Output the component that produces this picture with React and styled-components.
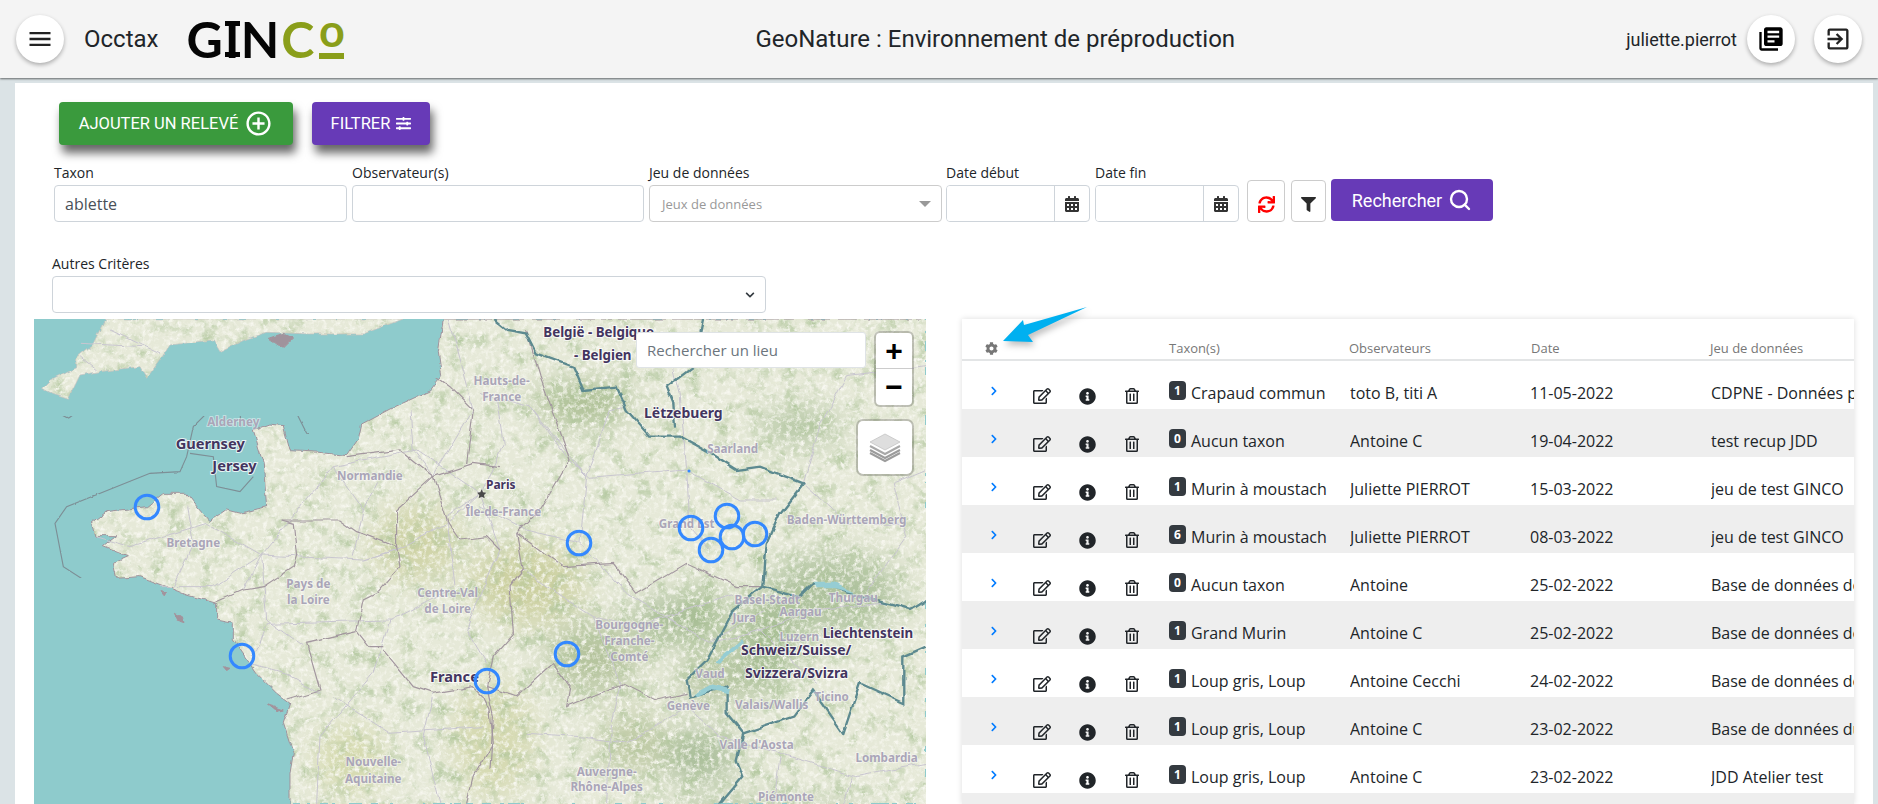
import React from 'react'
import styled, { createGlobalStyle } from 'styled-components'
import { MdMenu, MdLibraryBooks, MdExitToApp, MdAddCircleOutline } from 'react-icons/md'
import { Search } from 'lucide-react'
import {
  FaCalendarAlt, FaSync, FaFilter, FaCog, FaRegEdit, FaInfoCircle, FaRegTrashAlt, FaChevronRight, FaChevronDown, FaSlidersH,
} from 'react-icons/fa'

const GlobalStyle = createGlobalStyle`
  html, body { margin: 0; padding: 0; height: 100%; overflow: hidden; }
  body { background: #dbe3e6; font-family: "Open Sans", "Noto Sans", sans-serif; color: #212529; }
  * { box-sizing: border-box; }
`

/// TABLE DATA
const rows = [
  { n: 1, taxon: 'Crapaud commun', obs: 'toto B, titi A', date: '11-05-2022', jdd: 'CDPNE - Données partenaires' },
  { n: 0, taxon: 'Aucun taxon', obs: 'Antoine C', date: '19-04-2022', jdd: 'test recup JDD' },
  { n: 1, taxon: 'Murin à moustach', obs: 'Juliette PIERROT', date: '15-03-2022', jdd: 'jeu de test GINCO' },
  { n: 6, taxon: 'Murin à moustach', obs: 'Juliette PIERROT', date: '08-03-2022', jdd: 'jeu de test GINCO' },
  { n: 0, taxon: 'Aucun taxon', obs: 'Antoine', date: '25-02-2022', jdd: 'Base de données des partenaires' },
  { n: 1, taxon: 'Grand Murin', obs: 'Antoine C', date: '25-02-2022', jdd: 'Base de données des partenaires' },
  { n: 1, taxon: 'Loup gris, Loup', obs: 'Antoine Cecchi', date: '24-02-2022', jdd: 'Base de données des partenaires' },
  { n: 1, taxon: 'Loup gris, Loup', obs: 'Antoine C', date: '23-02-2022', jdd: 'Base de données du réseau' },
  { n: 1, taxon: 'Loup gris, Loup', obs: 'Antoine C', date: '23-02-2022', jdd: 'JDD Atelier test' },
  { n: null },
]

/// MAP DRAWING, points are read from crops of the map so each group is scaled by a third
const LAND = 'M760 360L790 460L800 590L760 600L720 610L680 600L630 635L590 590L560 550L490 550L440 590L320 605L275 640L285 680L350 680L310 710L385 740L340 760L350 805L420 800L500 830L560 855L650 880L650 930L700 940L700 990L770 1090L830 1150L870 1180L850 1240L880 1330L870 1390L870 1490L2900 1490L2900 27L1330 27L1315 127L1325 197L1290 242L1170 297L1085 342L1075 387L1040 437L960 427L870 422L850 347L810 342Z'
const UK = 'M125 235L150 250L205 268L240 195L300 185L420 170L440 205L480 150L510 105L640 90L660 125L740 87L800 67L930 72L1090 72L1210 27L315 27L280 100L230 140L230 170L150 210Z'
const ISLANDS = ['M805 85L850 70L880 85L850 115Z', 'M520 910L550 920L555 938L530 930Z', 'M670 1070L690 1075L680 1082Z', 'M805 1185L850 1200L830 1205Z', 'M480 845L500 850L490 858Z']
const SEA_BOUNDS = [
  'M180 27L180 110L160 150L103 175',
  'M103 300L150 298L205 325L270 280L320 228L450 260L500 240L540 150L600 130L650 180L780 145L850 165L1000 110L1100 125L1240 70L1270 27',
  'M1270 27L1262 120L1260 200L1040 300L1020 375L920 370L880 290L720 280L640 290L580 350L560 440L540 485L450 490L200 590L165 640L190 770L360 880L460 895L490 960L550 985L610 985L620 1090L720 1150L790 1280L820 1370L815 1482',
  'M570 430L640 440L650 530L720 545L760 500M720 280L722 350',
]
const REGIONS_W = [
  'M845 630L880 640L890 740L880 770L790 830L730 840L640 880',
  'M845 630L1020 630L1070 665L1190 710L1200 770L1130 850L1090 870L1070 960L1110 1010L1150 1010',
  'M1040 440L1200 420L1300 500L1190 600L1190 710',
  'M1070 965L920 1000L960 1140L860 1170',
  'M1150 1020L1240 1130L1300 1150L1420 1130L1450 1160L1470 1200L1480 1300L1420 1400L1400 1480',
  'M1300 500L1345 640L1380 690L1460 680L1500 720',
  'M1300 500L1420 460L1500 470M1310 200L1350 230L1420 300L1400 460',
]
const REGIONS_E = [
  'M110 670L250 770L400 760L470 850L620 760L770 830L850 830',
  'M140 60L180 200L270 450L180 600L110 670',
  'M220 1060L270 1130L260 1190L430 1120L530 1170L620 1150',
  'M110 670L130 780L90 830L100 970L40 1040L20 1130L40 1220L30 1380',
  'M20 1130L110 1160L220 1060',
]
const ROADS_W = [
  'M785 735L620 640L390 710L285 680M785 735L640 830L480 830M785 735L880 740L1090 750L1200 715M785 735L800 930L910 1010M785 735L730 840',
  'M785 735L1000 470L1250 420L1440 550M1000 470L1090 600L1060 740M1440 550L1340 640L1200 715L1090 750M1440 550L1340 620L1365 830L1170 930L1120 1090L960 1280L950 1480',
  'M1170 930L800 940L750 1060L860 1090L960 1150M1440 550L1500 720L1420 900L1400 960L1460 1060',
  'M560 590L580 700L520 830M1230 300L1240 420L1300 500L1420 300L1345 30M1090 600L1130 520M1300 1150L1270 1280L1320 1480M1000 1160L1170 1270L1450 1250',
  'M240 140L290 180M240 100L430 110M330 60L480 130',
]
const ROADS_E = [
  'M0 590L140 660L300 700L320 500L270 450L330 505L620 480L780 570L890 570M620 480L630 650L690 720M300 700L440 850L690 1000L850 900',
  'M0 250L150 290L260 440M50 270L70 400L0 560M150 290L320 500M320 500L390 300L430 290M620 480L600 250L570 130',
  'M130 780L230 850L340 920L460 950L620 900L760 850M340 920L420 1120L395 1230L380 1480M140 1270L300 1280L440 1300L640 1180',
  'M700 1000L840 960L1000 900L1210 880M840 960L930 1050L1010 1120M1020 350L990 450L970 520L1100 640L1260 640M1020 350L1100 200L1338 170',
  'M620 1190L720 1280L900 1330L1130 1400L1338 1360M1160 850L1280 680L1240 520L1338 480M900 1340L880 1482M1120 1400L1090 1482',
]
const BORDERS = [
  'M40 27L80 60L140 70L170 130L280 170L310 240L410 230L440 300L510 380L600 380L690 430L770 480L840 470L970 520L900 610L860 700L850 830',
  'M850 830L960 860L1000 820L1060 830L1180 870L1290 900L1338 870',
  'M850 830L760 900L680 1050L620 1110L630 1160L740 1130L740 1210L790 1270L940 1220L1000 1140L1090 1270L1140 1120L1270 1180L1270 1040L1338 1010',
  'M790 1270L770 1350L790 1400L720 1482',
  'M560 230L640 170L670 27M560 230L580 280L585 350',
]
const TINTS = [
  [1250, 700, 130, 110, '#cfd3a6'], [1480, 1290, 120, 170, '#d5d9b0'], [1580, 820, 170, 120, '#ccd0a0'],
  [1750, 280, 150, 60, '#a5ba8b'], [1990, 930, 90, 60, '#9fb68d'], [2110, 920, 60, 100, '#a0b98c'],
  [2300, 1000, 90, 150, '#a3bb90'], [2100, 1340, 110, 80, '#a6bb96'], [2300, 1550, 340, 70, '#b4c4a3'],
  [2400, 350, 130, 40, '#a2ba90'], [2150, 1110, 120, 60, '#aec099'], [1900, 1300, 100, 90, '#bdc9a3'],
  [1780, 1040, 140, 110, '#b6c49e'], [1050, 1350, 100, 100, '#d4d9ac'], [2500, 850, 200, 120, '#afc29e'],
]
const LABELS_W = [
  ['Alderney', 700, 347], ['Normandie', 1110, 511], ['Bretagne', 580, 710], ['Pays de', 925, 834], ['la Loire', 925, 882],
  ['Centre-Val', 1343, 860], ['de Loire', 1343, 908], ['Nouvelle-', 1120, 1368], ['Aquitaine', 1120, 1418], ['Île-de-France', 1510, 617],
]
const LABELS_E = [
  ['Saarland', 758, 430], ['Grand Est', 620, 655], ['Baden-Württemberg', 1100, 642], ['Basel-Stadt', 862, 882], ['Thurgau', 1120, 875],
  ['Jura', 793, 935], ['Aargau', 962, 918], ['Luzern', 958, 993], ['Vaud', 690, 1103], ['Genève', 625, 1200], ['Valais/Wallis', 875, 1198],
  ['Ticino', 1055, 1172], ["Valle d'Aosta", 830, 1316], ['Lombardia', 1220, 1355], ['Piémonte', 918, 1473], ['Auvergne-', 380, 1397],
  ['Rhône-Alpes', 380, 1443], ['Bourgogne-', 448, 957], ['Franche-', 448, 1005], ['Comté', 448, 1053], ['Hauts-de-', 65, 225], ['France', 65, 274],
]
const NAMES_W = [['Guernsey', 527, 418, 44], ['Jersey', 637, 482, 44], ['France', 1290, 1115, 44]]
const NAMES_E = [
  ['Paris', 18, 538, 36], ['België - Belgique', 190, 80, 40], ['- Belgien', 282, 150, 40], ['Lëtzebuerg', 492, 325, 42],
  ['Liechtenstein', 1028, 985, 40], ['Schweiz/Suisse/', 783, 1034, 42], ['Svizzera/Svizra', 795, 1104, 42],
]
const MARKERS = [[147, 507], [242, 656], [487, 681], [579, 543], [567, 654], [691, 528], [727, 516], [732, 537], [711, 550], [755, 534]]

const MapDrawing = () => (
  <MapSvg viewBox="34 319 892 485" preserveAspectRatio="none">
    <defs>
      <filter id="rough" filterUnits="userSpaceOnUse" x="34" y="319" width="892" height="485">
        <feTurbulence type="fractalNoise" baseFrequency="0.09" numOctaves="3" seed="4" />
        <feDisplacementMap in="SourceGraphic" scale="5" xChannelSelector="R" yChannelSelector="G" />
      </filter>
      <filter id="wiggle" filterUnits="userSpaceOnUse" x="34" y="319" width="892" height="485">
        <feTurbulence type="fractalNoise" baseFrequency="0.06" numOctaves="2" seed="9" />
        <feDisplacementMap in="SourceGraphic" scale="6" xChannelSelector="R" yChannelSelector="G" />
      </filter>
      <filter id="mottle" colorInterpolationFilters="sRGB">
        <feTurbulence type="fractalNoise" baseFrequency="0.06" numOctaves="4" seed="7" />
        <feColorMatrix values="0 0 0 0 .68  0 0 0 0 .77  0 0 0 0 .6  2.2 0 0 0 -1.05" />
      </filter>
      <filter id="speckle" colorInterpolationFilters="sRGB">
        <feTurbulence type="fractalNoise" baseFrequency="0.22" numOctaves="3" seed="12" />
        <feColorMatrix values="0 0 0 0 .97  0 0 0 0 .97  0 0 0 0 .94  2.6 0 0 0 -1.15" />
      </filter>
      <filter id="soft" x="-30%" y="-30%" width="160%" height="160%"><feGaussianBlur stdDeviation="45" /></filter>
      <mask id="landMask" maskUnits="userSpaceOnUse" x="34" y="319" width="892" height="485">
        <g fill="#fff" transform="translate(0 310) scale(.3333)">
          <path d={LAND} />
          <path d={UK} />
          {ISLANDS.map(d => <path key={d} d={d} />)}
        </g>
      </mask>
    </defs>

    <rect x="34" y="319" width="892" height="485" fill="#8ecbcc" />

    <g filter="url(#rough)">
      <g mask="url(#landMask)">
        <rect x="34" y="319" width="892" height="485" fill="#e6e9d8" />
        <g transform="translate(0 310) scale(.3333)" filter="url(#soft)">
          {TINTS.map(([cx, cy, rx, ry, fill]) => (
            <ellipse key={`${cx}-${cy}`} cx={cx} cy={cy} rx={rx} ry={ry} fill={fill} />
          ))}
        </g>
        <rect x="34" y="319" width="892" height="485" filter="url(#mottle)" />
        <rect x="34" y="319" width="892" height="485" filter="url(#speckle)" />
      </g>
      <g fill="none" stroke="#a0939c" strokeWidth="3" transform="translate(0 310) scale(.3333)">
        <path d={LAND} />
        <path d={UK} strokeWidth="2" stroke="#c4c0be" />
        {ISLANDS.map(d => <path key={d} d={d} fill="#a0939c" />)}
      </g>
    </g>

    <g fill="none" stroke="#7d8f96" strokeWidth="3.4" filter="url(#wiggle)" transform="translate(0 310) scale(.3333)">
      {SEA_BOUNDS.map(d => <path key={d} d={d} />)}
    </g>

    <g filter="url(#wiggle)" fill="none">
      <g stroke="#c9c6d0" strokeWidth="3" transform="translate(0 310) scale(.3333)">
        {ROADS_W.map(d => <path key={d} d={d} />)}
      </g>
      <g stroke="#c9c6d0" strokeWidth="3" transform="translate(480 310) scale(.3333)">
        {ROADS_E.map(d => <path key={d} d={d} />)}
      </g>
      <g stroke="#a3979f" strokeWidth="3.6" transform="translate(0 310) scale(.3333)">
        {REGIONS_W.map(d => <path key={d} d={d} />)}
      </g>
      <g stroke="#a3979f" strokeWidth="3.6" transform="translate(480 310) scale(.3333)">
        {REGIONS_E.map(d => <path key={d} d={d} />)}
      </g>
      <g transform="translate(480 310) scale(.3333)">
        {BORDERS.map(d => <path key={d} d={d} stroke="#5d8a90" strokeWidth="7" />)}
      </g>
      <g fill="#96cdd3" stroke="none" transform="translate(480 310) scale(.3333)">
        <path d="M640 1150L690 1122L750 1135L745 1150L690 1140L650 1160Z" />
        <path d="M705 1055L790 985L795 995L720 1058Z" />
        <path d="M1000 815L1060 815L1130 850L1060 835L1010 835Z" />
      </g>
    </g>

    <g transform="translate(0 310) scale(.3333)">
      {LABELS_W.map(([t, x, y]) => <RegionLabel key={t} x={x} y={y} textAnchor="middle">{t}</RegionLabel>)}
      {NAMES_W.map(([t, x, y, s]) => <PlaceName key={t} x={x} y={y} fontSize={s}>{t}</PlaceName>)}
    </g>
    <g transform="translate(480 310) scale(.3333)">
      {LABELS_E.map(([t, x, y]) => <RegionLabel key={t} x={x} y={y} textAnchor="middle">{t}</RegionLabel>)}
      {NAMES_E.map(([t, x, y, s]) => <PlaceName key={t} x={x} y={y} fontSize={s}>{t}</PlaceName>)}
      <path d="M5 538l4 9 10 1-7 7 2 10-9-5-9 5 2-10-7-7 10-1z" fill="#4a4a4a" />
    </g>

    <circle cx="689" cy="471" r="1.5" fill="#3388ff" />
    {MARKERS.map(([cx, cy]) => (
      <circle key={`${cx}-${cy}`} cx={cx} cy={cy} r="11.8" fill="none" stroke="#3388ff" strokeWidth="3" />
    ))}
  </MapSvg>
)

const LayersIcon = () => (
  <svg width="32" height="32" viewBox="0 0 32 32" fill="none">
    <path d="M1 21l15 8 15-8" stroke="#9c9c9c" strokeWidth="2" />
    <path d="M1 18l15 8 15-8" stroke="#9c9c9c" strokeWidth="2" />
    <path d="M1 14l15 8 15-8" stroke="#a8a8a8" strokeWidth="2" />
    <path d="M16 2L1 10l15 8 15-8z" fill="#dedede" stroke="#c4c4c4" strokeWidth=".8" />
  </svg>
)

const Arrow = () => (
  <ArrowSvg width="96" height="50" viewBox="0 0 96 50">
    <path d="M92 4L29 22L28 17L8 38L38 39L33 32Z" fill="#00b0f0" />
  </ArrowSvg>
)

const Field = ({ label, width, shift, children }) => (
  <FieldBox $width={width} $shift={shift}>
    <FieldLabel>{label}</FieldLabel>
    {children}
  </FieldBox>
)

const DateField = ({ label, shift }) => (
  <Field label={label} width={144} shift={shift}>
    <InputGroup>
      <DateInput />
      <CalendarAddon><FaCalendarAlt size={16} /></CalendarAddon>
    </InputGroup>
  </Field>
)

const Badge = styled.span`
  display: inline-flex;
  flex: none;
  align-items: center;
  justify-content: center;
  width: 17px;
  height: 19px;
  margin-right: 5px;
  border-radius: 4px;
  background: #343a40;
  color: #fff;
  font-size: 12px;
  font-weight: 700;
`

const App = () => (
  <Page>
    <GlobalStyle />
    <Header>
      <RoundButton><MdMenu size={28} /></RoundButton>
      <ModuleName>Occtax</ModuleName>
      <Logo>
        G<LogoI>I</LogoI>N<LogoC>C</LogoC>
        <LogoSup>o<LogoBar /></LogoSup>
      </Logo>
      <Title>GeoNature : Environnement de préproduction</Title>
      <UserName>juliette.pierrot</UserName>
      <RoundButton $gap={10}><MdLibraryBooks size={28} color="#000" /></RoundButton>
      <RoundButton $gap={19}><MdExitToApp size={28} /></RoundButton>
    </Header>

    <Card>
      <ActionBar>
        <ActionButton $bg="#3a9a3d" $width={234}>AJOUTER UN RELEVÉ <MdAddCircleOutline size={29} /></ActionButton>
        <ActionButton $bg="#673ab7" $width={118}>FILTRER <FaSlidersH size={15} /></ActionButton>
      </ActionBar>

      <FilterRow>
        <Field label="Taxon" width={293}><TextInput defaultValue="ablette" /></Field>
        <Field label="Observateur(s)" width={292}><TextInput /></Field>
        <Field label="Jeu de données" width={293}>
          <SelectBox>
            Jeux de données
            <Caret />
          </SelectBox>
        </Field>
        <DateField label="Date début" shift={-1} />
        <DateField label="Date fin" />
        <ToolButton $width={38} $shift={3}><FaSync size={17} color="#ff0000" /></ToolButton>
        <ToolButton $width={35} $shift={1}><FaFilter size={15} color="#2b2b2b" /></ToolButton>
        <SearchButton>Rechercher <Search size={24} strokeWidth={2.4} /></SearchButton>
      </FilterRow>

      <OtherCriteria>
        <FieldLabel>Autres Critères</FieldLabel>
        <CriteriaSelect><FaChevronDown size={10} color="#343a40" /></CriteriaSelect>
      </OtherCriteria>

      <Content>
        <MapPane>
          <MapDrawing />
          <PlaceSearch>Rechercher un lieu</PlaceSearch>
          <ZoomControl>
            <ZoomButton>+</ZoomButton>
            <ZoomButton>−</ZoomButton>
          </ZoomControl>
          <LayersControl><LayersIcon /></LayersControl>
        </MapPane>

        <TablePane>
          <Arrow />
          <HeadRow>
            <HeadGear><FaCog size={13} color="#777" /></HeadGear>
            <HeadCell>Taxon(s)</HeadCell>
            <HeadCell>Observateurs</HeadCell>
            <HeadCell>Date</HeadCell>
            <HeadCell>Jeu de données</HeadCell>
          </HeadRow>
          {rows.map((row, i) => (
            <Row key={i} $odd={i % 2 === 1}>
              {row.n !== null && (
                <>
                  <Actions>
                    <RowChevron size={10} color="#007bff" />
                    <ActionIcons>
                      <FaRegEdit size={18} />
                      <FaInfoCircle size={17} />
                      <FaRegTrashAlt size={16} />
                    </ActionIcons>
                  </Actions>
                  <Cell $width={158}><Badge>{row.n}</Badge>{row.taxon}</Cell>
                  <Cell>{row.obs}</Cell>
                  <Cell>{row.date}</Cell>
                  <Cell>{row.jdd}</Cell>
                </>
              )}
            </Row>
          ))}
        </TablePane>
      </Content>
    </Card>
  </Page>
)

export default App

const Page = styled.div`
  display: flex;
  flex-direction: column;
  height: 100vh;
  overflow: hidden;
`

const Header = styled.header`
  flex: none;
  display: flex;
  align-items: center;
  height: 78px;
  padding: 0 16px;
  background: #f4f4f4;
  box-shadow: 0 1px 2px rgba(0, 0, 0, .55);
  font-family: Roboto, sans-serif;
  position: relative;
`

const RoundButton = styled.div`
  flex: none;
  display: flex;
  align-items: center;
  justify-content: center;
  width: 48px;
  height: 48px;
  margin-left: ${p => p.$gap || 0}px;
  border-radius: 50%;
  background: #fff;
  color: #222;
  box-shadow: 0 2px 4px rgba(0, 0, 0, .3);
`

const ModuleName = styled.div`
  margin-left: 20px;
  font-size: 24px;
`

const Logo = styled.div`
  display: flex;
  align-items: flex-end;
  height: 50px;
  margin-left: 28px;
  font-family: Lato, sans-serif;
  font-size: 50px;
  font-weight: 700;
  line-height: 50px;
  color: #050505;
`

const LogoI = styled.span`
  position: relative;
  width: 15px;
  margin: 0 1px 0 2px;
  text-align: center;
  &::before, &::after {
    content: '';
    position: absolute;
    left: 0;
    right: 0;
    height: 5px;
    background: #050505;
  }
  &::before { top: 7px; }
  &::after { bottom: 7px; }
`

const LogoC = styled.span`
  margin-left: 2px;
  color: #8a9e1a;
`

const LogoSup = styled.span`
  display: flex;
  flex-direction: column;
  align-items: center;
  width: 27px;
  margin-left: 4px;
  font-size: 45px;
  line-height: 20px;
  height: 44px;
  color: #8a9e1a;
`

const LogoBar = styled.span`
  display: block;
  flex: none;
  width: 25px;
  height: 6px;
  margin-top: 13px;
  background: #8a9e1a;
`

const Title = styled.div`
  margin-left: 410px;
  font-size: 24px;
  white-space: nowrap;
`

const UserName = styled.div`
  margin-left: auto;
  font-size: 18px;
`

const Card = styled.main`
  flex: 1;
  min-height: 0;
  margin: 5px 5px 0 15px;
  padding: 19px 19px 0;
  background: #fff;
  overflow: hidden;
`

const ActionBar = styled.div`
  display: flex;
  gap: 19px;
  margin-left: 25px;
`

const ActionButton = styled.div`
  display: flex;
  align-items: center;
  justify-content: center;
  gap: 6px;
  width: ${p => p.$width}px;
  height: 43px;
  border-radius: 4px;
  background: ${p => p.$bg};
  color: #fff;
  font-family: Roboto, sans-serif;
  font-size: 16.500px;
  font-weight: 400;
  box-shadow: 3px 8px 10px rgba(0, 0, 0, .6);
`

const FilterRow = styled.div`
  display: flex;
  align-items: flex-end;
  gap: 5px;
  height: 60px;
  margin: 17px 0 0 20px;
`

const FieldBox = styled.div`
  flex: none;
  width: ${p => p.$width}px;
  margin-left: ${p => p.$shift || 0}px;
`

const FieldLabel = styled.label`
  display: block;
  height: 22px;
  font-size: 14px;
  line-height: 19px;
  color: #212529;
`

const TextInput = styled.input`
  display: block;
  width: 100%;
  height: 37px;
  padding: 0 10px;
  border: 1px solid #ced4da;
  border-radius: 4px;
  background: #fff;
  color: #495057;
  font: 16px "Open Sans", sans-serif;
`

const SelectBox = styled.div`
  display: flex;
  align-items: center;
  justify-content: space-between;
  height: 37px;
  padding: 0 10px 0 12px;
  border: 1px solid #ccc;
  border-radius: 4px;
  color: #999;
  font-size: 13px;
`

const Caret = styled.span`
  border-left: 6px solid transparent;
  border-right: 6px solid transparent;
  border-top: 6px solid #999;
`

const InputGroup = styled.div`
  display: flex;
  height: 37px;
  border: 1px solid #ced4da;
  border-radius: 4px;
  overflow: hidden;
`

const DateInput = styled.input`
  flex: 1;
  min-width: 0;
  border: 0;
  outline: 0;
`

const CalendarAddon = styled.div`
  flex: none;
  display: flex;
  align-items: center;
  justify-content: center;
  width: 35px;
  border-left: 1px solid #ced4da;
  color: #333;
`

const ToolButton = styled.div`
  flex: none;
  display: flex;
  align-items: center;
  justify-content: center;
  width: ${p => p.$width}px;
  height: 42px;
  margin-left: ${p => p.$shift}px;
  padding-top: 6px;
  border: 1px solid #ccc;
  border-radius: 4px;
`

const SearchButton = styled.div`
  flex: none;
  display: flex;
  align-items: center;
  justify-content: center;
  gap: 6px;
  width: 162px;
  height: 42px;
  margin-bottom: 1px;
  border-radius: 4px;
  background: #673ab7;
  color: #fff;
  font-family: Roboto, sans-serif;
  font-size: 18px;
  font-weight: 400;
`

const OtherCriteria = styled.div`
  width: 714px;
  margin: 32px 0 0 18px;
`

const CriteriaSelect = styled.div`
  display: flex;
  align-items: center;
  justify-content: flex-end;
  height: 37px;
  padding-right: 10px;
  border: 1px solid #ced4da;
  border-radius: 4px;
`

const Content = styled.div`
  display: grid;
  grid-template-columns: 1fr 1fr;
  gap: 36px;
  margin-top: 6px;
`

const MapPane = styled.section`
  position: relative;
  height: 485px;
  overflow: hidden;
  font-family: "Open Sans", sans-serif;
`

const MapSvg = styled.svg`
  display: block;
  width: 100%;
  height: 100%;
`

const RegionLabel = styled.text`
  font-family: "Noto Sans", sans-serif;
  font-size: 35px;
  font-weight: 700;
  fill: #aaa5b8;
  stroke: rgba(255, 255, 255, .55);
  stroke-width: 5px;
  paint-order: stroke;
`

const PlaceName = styled.text`
  font-family: "Noto Sans", sans-serif;
  font-weight: 700;
  fill: #43355f;
  stroke: rgba(255, 255, 255, .8);
  stroke-width: 6px;
  paint-order: stroke;
`

const PlaceSearch = styled.div`
  position: absolute;
  top: 13px;
  left: 602px;
  width: 230px;
  height: 36px;
  padding-left: 10px;
  border: 1px solid #dfe3e6;
  border-radius: 3px;
  background: #fff;
  color: #6c757d;
  font-size: 15px;
  line-height: 34px;
`

const ZoomControl = styled.div`
  position: absolute;
  top: 14px;
  left: 842px;
  width: 36px;
  height: 72px;
  border-radius: 4px;
  background: #fff;
  box-shadow: 0 0 0 2px rgba(0, 0, 0, .2);
  overflow: hidden;
`

const ZoomButton = styled.div`
  height: 36px;
  border-bottom: 1px solid #ccc;
  text-align: center;
  font-family: "Liberation Sans", sans-serif;
  font-size: 30px;
  font-weight: 700;
  line-height: 35px;
  color: #000;
  &:last-child { border-bottom: 0; }
`

const LayersControl = styled.div`
  position: absolute;
  top: 102px;
  left: 824px;
  display: flex;
  align-items: center;
  justify-content: center;
  width: 54px;
  height: 53px;
  border-radius: 5px;
  background: #fff;
  box-shadow: 0 0 0 2px rgba(0, 0, 0, .2);
`

const TablePane = styled.section`
  position: relative;
  height: 485px;
  box-shadow: 0 0 6px rgba(0, 0, 0, .14);
`

const ArrowSvg = styled.svg`
  position: absolute;
  top: -16px;
  left: 33px;
  filter: drop-shadow(2px 4px 3px rgba(0, 0, 0, .25));
`

const HeadRow = styled.div`
  display: grid;
  grid-template-columns: 207px 180px 182px 179px 1fr;
  align-items: end;
  height: 42px;
  border-bottom: 2px solid #e3e5e6;
`

const HeadGear = styled.div`
  display: flex;
  padding: 0 0 4px 23px;
`

const HeadCell = styled.div`
  padding-bottom: 1px;
  font-size: 13px;
  line-height: 20px;
  color: #777;
`

const Row = styled.div`
  display: grid;
  grid-template-columns: 207px 181px 180px 181px 1fr;
  height: 48px;
  padding-top: 20px;
  background: ${p => (p.$odd ? '#eee' : '#fff')};
  font-size: 16px;
  line-height: 24px;
  color: #212529;
`

const Actions = styled.div`
  display: flex;
  padding-left: 27px;
  line-height: 0;
`

const RowChevron = styled(FaChevronRight)`
  flex: none;
  margin-top: 5px;
`

const ActionIcons = styled.div`
  display: flex;
  align-items: center;
  gap: 28px;
  height: 26px;
  margin: 2px 0 0 34px;
`

const Cell = styled.div`
  display: flex;
  align-items: flex-start;
  ${p => p.$width && `max-width: ${p.$width}px;`}
  white-space: nowrap;
  overflow: hidden;
`
